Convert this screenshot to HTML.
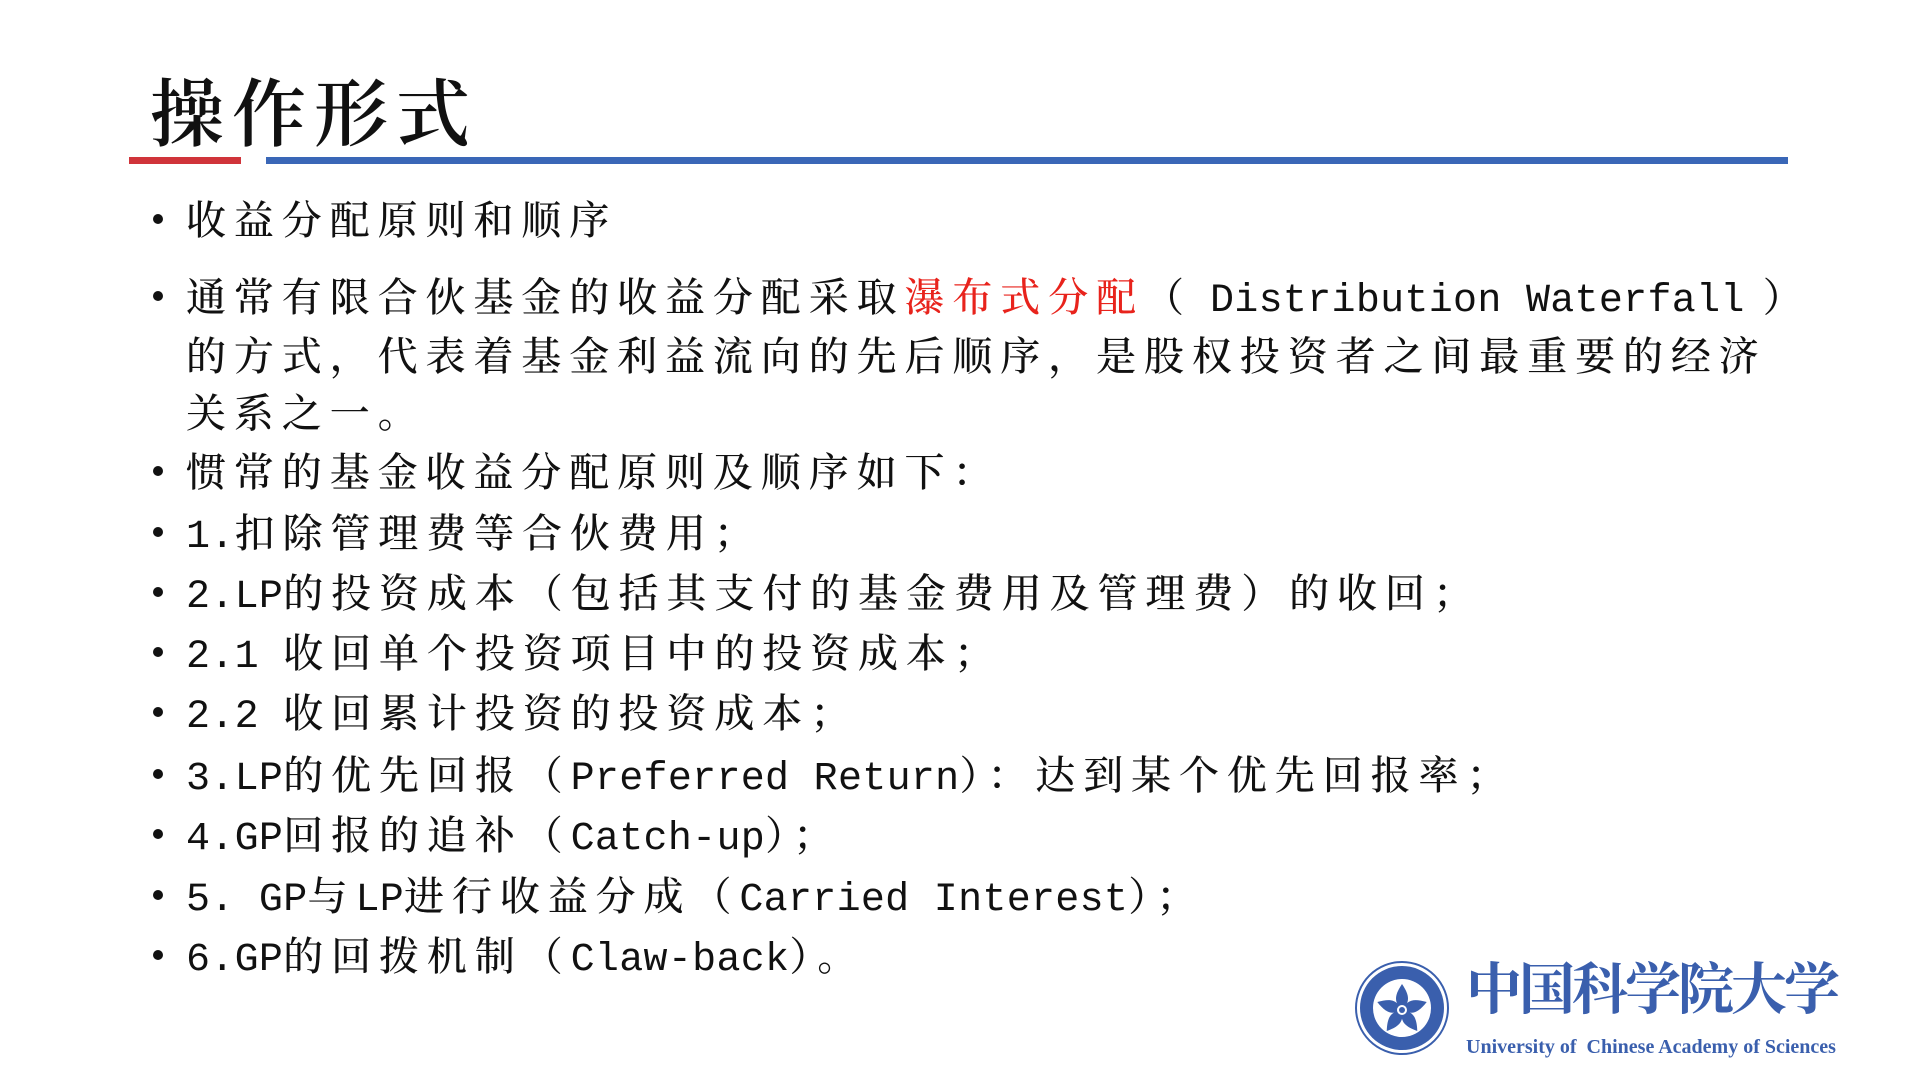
<!DOCTYPE html>
<html><head><meta charset="utf-8"><style>
body{margin:0;width:1920px;height:1080px;background:#fff;position:relative;overflow:hidden;font-family:"Liberation Serif","Noto Serif CJK SC",serif;color:#111}
.t{position:absolute;left:150px;top:72px;font-size:74px;letter-spacing:8px;font-family:"Noto Serif CJK SC",serif;font-weight:600;line-height:1}
.l{position:absolute;left:186px;font-size:40px;letter-spacing:7.9px;white-space:nowrap;line-height:1;font-family:"Noto Serif CJK SC",serif;font-weight:500}
.l:before{content:"";position:absolute;left:-33px;top:16px;width:10px;height:10px;border-radius:50%;background:#111}
.nb:before{display:none}
.m{font-family:"Liberation Mono",monospace;letter-spacing:0.3px;font-size:40px;font-weight:normal}
.r{color:#e8231c}
</style></head><body>
<div class="t">操作形式</div>
<div style="position:absolute;left:129px;top:157px;width:112px;height:7px;background:#d0343a"></div>
<div style="position:absolute;left:266px;top:157px;width:1522px;height:7px;background:#3a67b7"></div>

<div class="l" style="top:198px">收益分配原则和顺序</div>
<div class="l" style="top:275px">通常有限合伙基金的收益分配采取<span class="r">瀑布式分配</span>（ <span class="m">Distribution Waterfall</span> ）</div>
<div class="l nb" style="top:334px">的方式，代表着基金利益流向的先后顺序，是股权投资者之间最重要的经济</div>
<div class="l nb" style="top:391px">关系之一。</div>
<div class="l" style="top:450px">惯常的基金收益分配原则及顺序如下：</div>
<div class="l" style="top:511px"><span class="m">1.</span>扣除管理费等合伙费用；</div>
<div class="l" style="top:571px"><span class="m">2.LP</span>的投资成本（包括其支付的基金费用及管理费）的收回；</div>
<div class="l" style="top:631px"><span class="m">2.1 </span>收回单个投资项目中的投资成本；</div>
<div class="l" style="top:691px"><span class="m">2.2 </span>收回累计投资的投资成本；</div>
<div class="l" style="top:753px"><span class="m">3.LP</span>的优先回报（<span class="m">Preferred Return</span>）：达到某个优先回报率；</div>
<div class="l" style="top:813px"><span class="m">4.GP</span>回报的追补（<span class="m">Catch-up</span>）；</div>
<div class="l" style="top:874px"><span class="m">5. GP</span>与<span class="m">LP</span>进行收益分成（<span class="m">Carried Interest</span>）；</div>
<div class="l" style="top:934px"><span class="m">6.GP</span>的回拨机制（<span class="m">Claw-back</span>）。</div>

<svg style="position:absolute;left:1354px;top:960px" width="96" height="96" viewBox="0 0 96 96">
<circle cx="48" cy="48" r="46" fill="#fff" stroke="#3a5fad" stroke-width="2"/>
<circle cx="48" cy="48" r="42" fill="#3a5fad"/>
<circle cx="48" cy="48" r="29" fill="#fff"/>
<g fill="#3a5fad" transform="translate(48,50)">
<path d="M0,-26 C8,-14 8,-8 0,0 C-8,-8 -8,-14 0,-26Z"/>
<path d="M0,-26 C8,-14 8,-8 0,0 C-8,-8 -8,-14 0,-26Z" transform="rotate(72)"/>
<path d="M0,-26 C8,-14 8,-8 0,0 C-8,-8 -8,-14 0,-26Z" transform="rotate(144)"/>
<path d="M0,-26 C8,-14 8,-8 0,0 C-8,-8 -8,-14 0,-26Z" transform="rotate(216)"/>
<path d="M0,-26 C8,-14 8,-8 0,0 C-8,-8 -8,-14 0,-26Z" transform="rotate(288)"/>
<circle r="5" fill="#fff"/><circle r="3"/>
</g>
</svg>
<div style="position:absolute;left:1466px;top:958px;font-size:56px;line-height:1;color:#3a5fad;font-family:'Noto Serif CJK SC',serif;font-weight:700;letter-spacing:-3px;white-space:nowrap">中国科学院大学</div>
<div style="position:absolute;left:1466px;top:1037px;font-size:20px;line-height:1;color:#3a5fad;font-family:'Liberation Serif',serif;font-weight:bold;white-space:nowrap">University of&nbsp; Chinese Academy of Sciences</div>
</body></html>
